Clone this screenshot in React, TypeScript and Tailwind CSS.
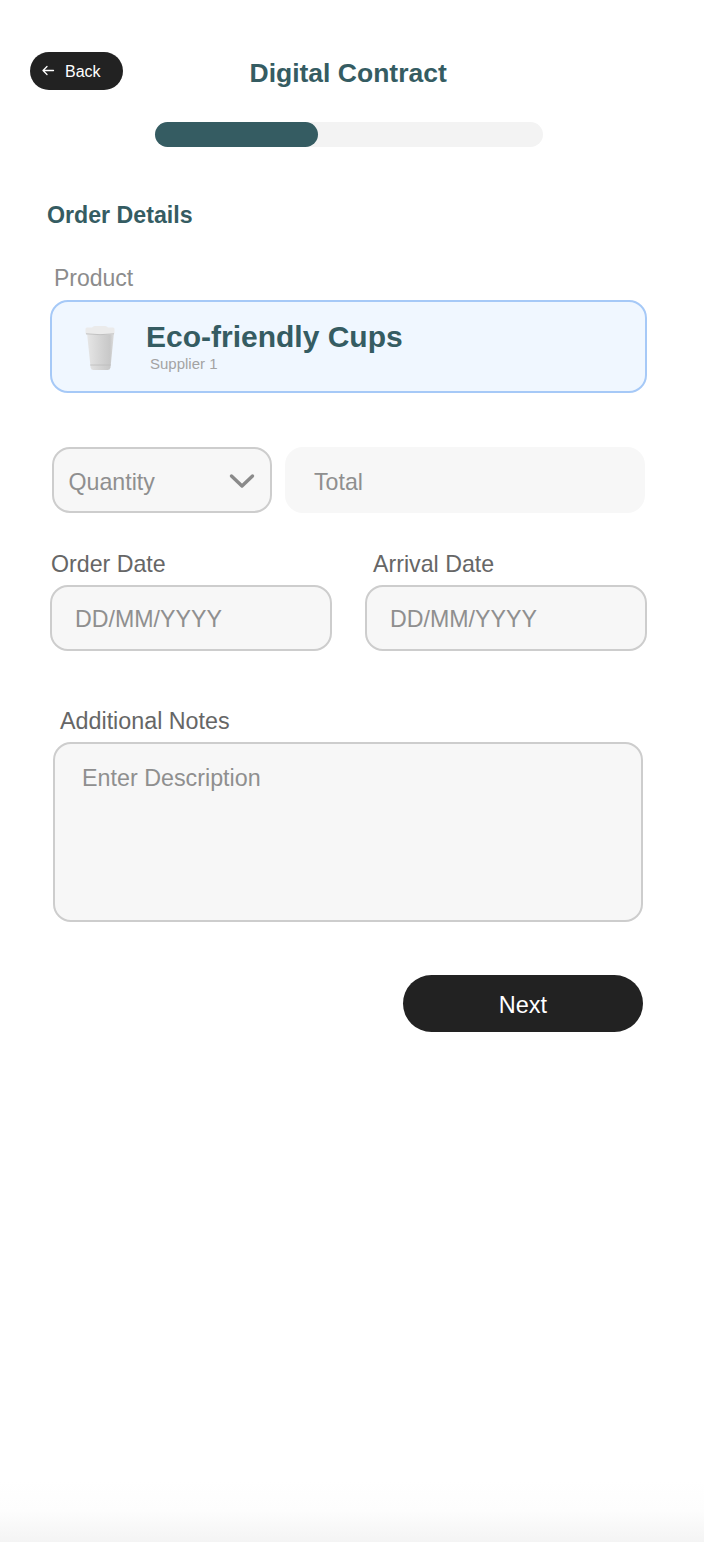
import React from "react";

function Cup() {
  return (
    <svg width="34" height="46" viewBox="0 0 34 46" className="mt-[3px] shrink-0">
      <defs>
        <linearGradient id="cupBody" x1="0" y1="0" x2="1" y2="0">
          <stop offset="0" stopColor="#e6e6e6" />
          <stop offset="0.6" stopColor="#d0d0d0" />
          <stop offset="0.85" stopColor="#c8c8c8" />
          <stop offset="1" stopColor="#dedede" />
        </linearGradient>
      </defs>
      <path d="M3 8 H30 L26.5 42.5 Q26 45 23.5 45 H9.5 Q7 45 6.6 42.5 Z" fill="url(#cupBody)" />
      <path d="M6.2 40 H26.9" stroke="#bdbdbd" strokeWidth="0.8" />
      <path d="M1.5 4 Q1.5 2.6 3.5 2.6 H8 Q9 1 11 1 H21 Q23 1 24 2.6 H28.5 Q30.5 2.6 30.5 4 L30.5 8 Q30.5 9.5 28.5 9.5 H3.5 Q1.5 9.5 1.5 8 Z" fill="#ebebeb" />
      <path d="M2 8.8 Q16 10.6 30 8.8" stroke="#c2c2c2" strokeWidth="1" fill="none" />
    </svg>
  );
}

export default function App() {
  return (
    <div className="relative flex h-[1542px] w-[704px] flex-col overflow-hidden bg-white font-['Liberation_Sans',Arial,sans-serif]">
      <div className="relative mt-[52px] ml-[30px] h-[38px]">
        <button className="flex h-[38px] w-[93px] items-center rounded-full bg-[#222222] pl-[11px] text-[16px] text-white">
          <svg width="14" height="14" viewBox="0 0 14 14" fill="none" stroke="white" strokeWidth="1.3" strokeLinecap="round" strokeLinejoin="round">
            <path d="M12.5 6.5 H2 M6 2.5 L2 6.5 L6 10.5" />
          </svg>
          <span className="mt-[1px] ml-[10px]">Back</span>
        </button>
        <h1 className="absolute top-[4px] left-[219.5px] text-[26.5px] leading-[34px] font-bold whitespace-nowrap text-[#355c62]">Digital Contract</h1>
      </div>

      <div className="mt-[32px] ml-[155px] h-[25px] w-[388px] rounded-full bg-[#f3f3f3]">
        <div className="h-[25px] w-[163px] rounded-full bg-[#355c62]" />
      </div>

      <h2 className="mt-[55px] ml-[47px] text-[23.2px] leading-[27px] font-bold text-[#355c62]">Order Details</h2>

      <div className="mt-[36px] ml-[54px] text-[23px] leading-[27px] text-[#8c8c8c]">Product</div>

      <div className="mt-[8px] ml-[50px] flex h-[93px] w-[597px] items-center rounded-[18px] border-2 border-[#a6c9f7] bg-[#f0f7ff] pl-[31.5px]">
        <Cup />
        <div className="-mt-[1px] ml-[28.5px]">
          <div className="text-[30px] leading-[34px] font-bold text-[#355c62]">Eco-friendly Cups</div>
          <div className="mt-[1px] ml-[4px] text-[15px] leading-[18px] text-[#a3a3a3]">Supplier 1</div>
        </div>
      </div>

      <div className="mt-[54px] ml-[52px] flex w-[593px] gap-[13px]">
        <div className="flex h-[66px] w-[220px] items-center justify-between rounded-[18px] border-2 border-[#cdcdcd] bg-[#f7f7f7] pr-[15px] pl-[14.5px]">
          <span className="mt-[4px] text-[23.2px] text-[#8f8f8f]">Quantity</span>
          <svg width="26" height="16" viewBox="0 0 26 16" fill="none" stroke="#8a8a8a" strokeWidth="3.4" strokeLinecap="round" strokeLinejoin="round" className="mt-[2px]">
            <path d="M2.5 3 L13 13 L23.5 3" />
          </svg>
        </div>
        <div className="flex h-[66px] w-[360px] items-center rounded-[18px] bg-[#f7f7f7] pt-[4px] pl-[29px] text-[23.2px] text-[#8f8f8f]">Total</div>
      </div>

      <div className="mt-[38px] ml-[50px] flex w-[597px] gap-[33px]">
        <div className="w-[282px]">
          <div className="ml-[1px] text-[23.2px] leading-[27px] text-[#666666]">Order Date</div>
          <div className="mt-[7px] flex h-[66px] items-center rounded-[18px] border-2 border-[#cdcdcd] bg-[#f7f7f7] pt-[2px] pl-[23px] text-[23.2px] text-[#8f8f8f]">DD/MM/YYYY</div>
        </div>
        <div className="w-[282px]">
          <div className="ml-[8px] text-[23.2px] leading-[27px] text-[#666666]">Arrival Date</div>
          <div className="mt-[7px] flex h-[66px] items-center rounded-[18px] border-2 border-[#cdcdcd] bg-[#f7f7f7] pt-[2px] pl-[23px] text-[23.2px] text-[#8f8f8f]">DD/MM/YYYY</div>
        </div>
      </div>

      <div className="mt-[57px] ml-[60px] text-[23.3px] leading-[27px] text-[#666666]">Additional Notes</div>
      <div className="mt-[7px] ml-[53px] h-[180px] w-[590px] rounded-[18px] border-2 border-[#cdcdcd] bg-[#f7f7f7] pt-[20px] pl-[27px] text-[23.3px] leading-[28px] text-[#8f8f8f]">Enter Description</div>

      <button className="mt-[53px] ml-[403px] flex h-[57px] w-[240px] items-center justify-center rounded-full bg-[#222222] pt-[4px] text-[23.5px] text-white">Next</button>

      <div className="absolute right-0 bottom-0 left-0 h-[62px] bg-gradient-to-b from-white via-[#fdfdfd] to-[#f4f4f4]" />
    </div>
  );
}
